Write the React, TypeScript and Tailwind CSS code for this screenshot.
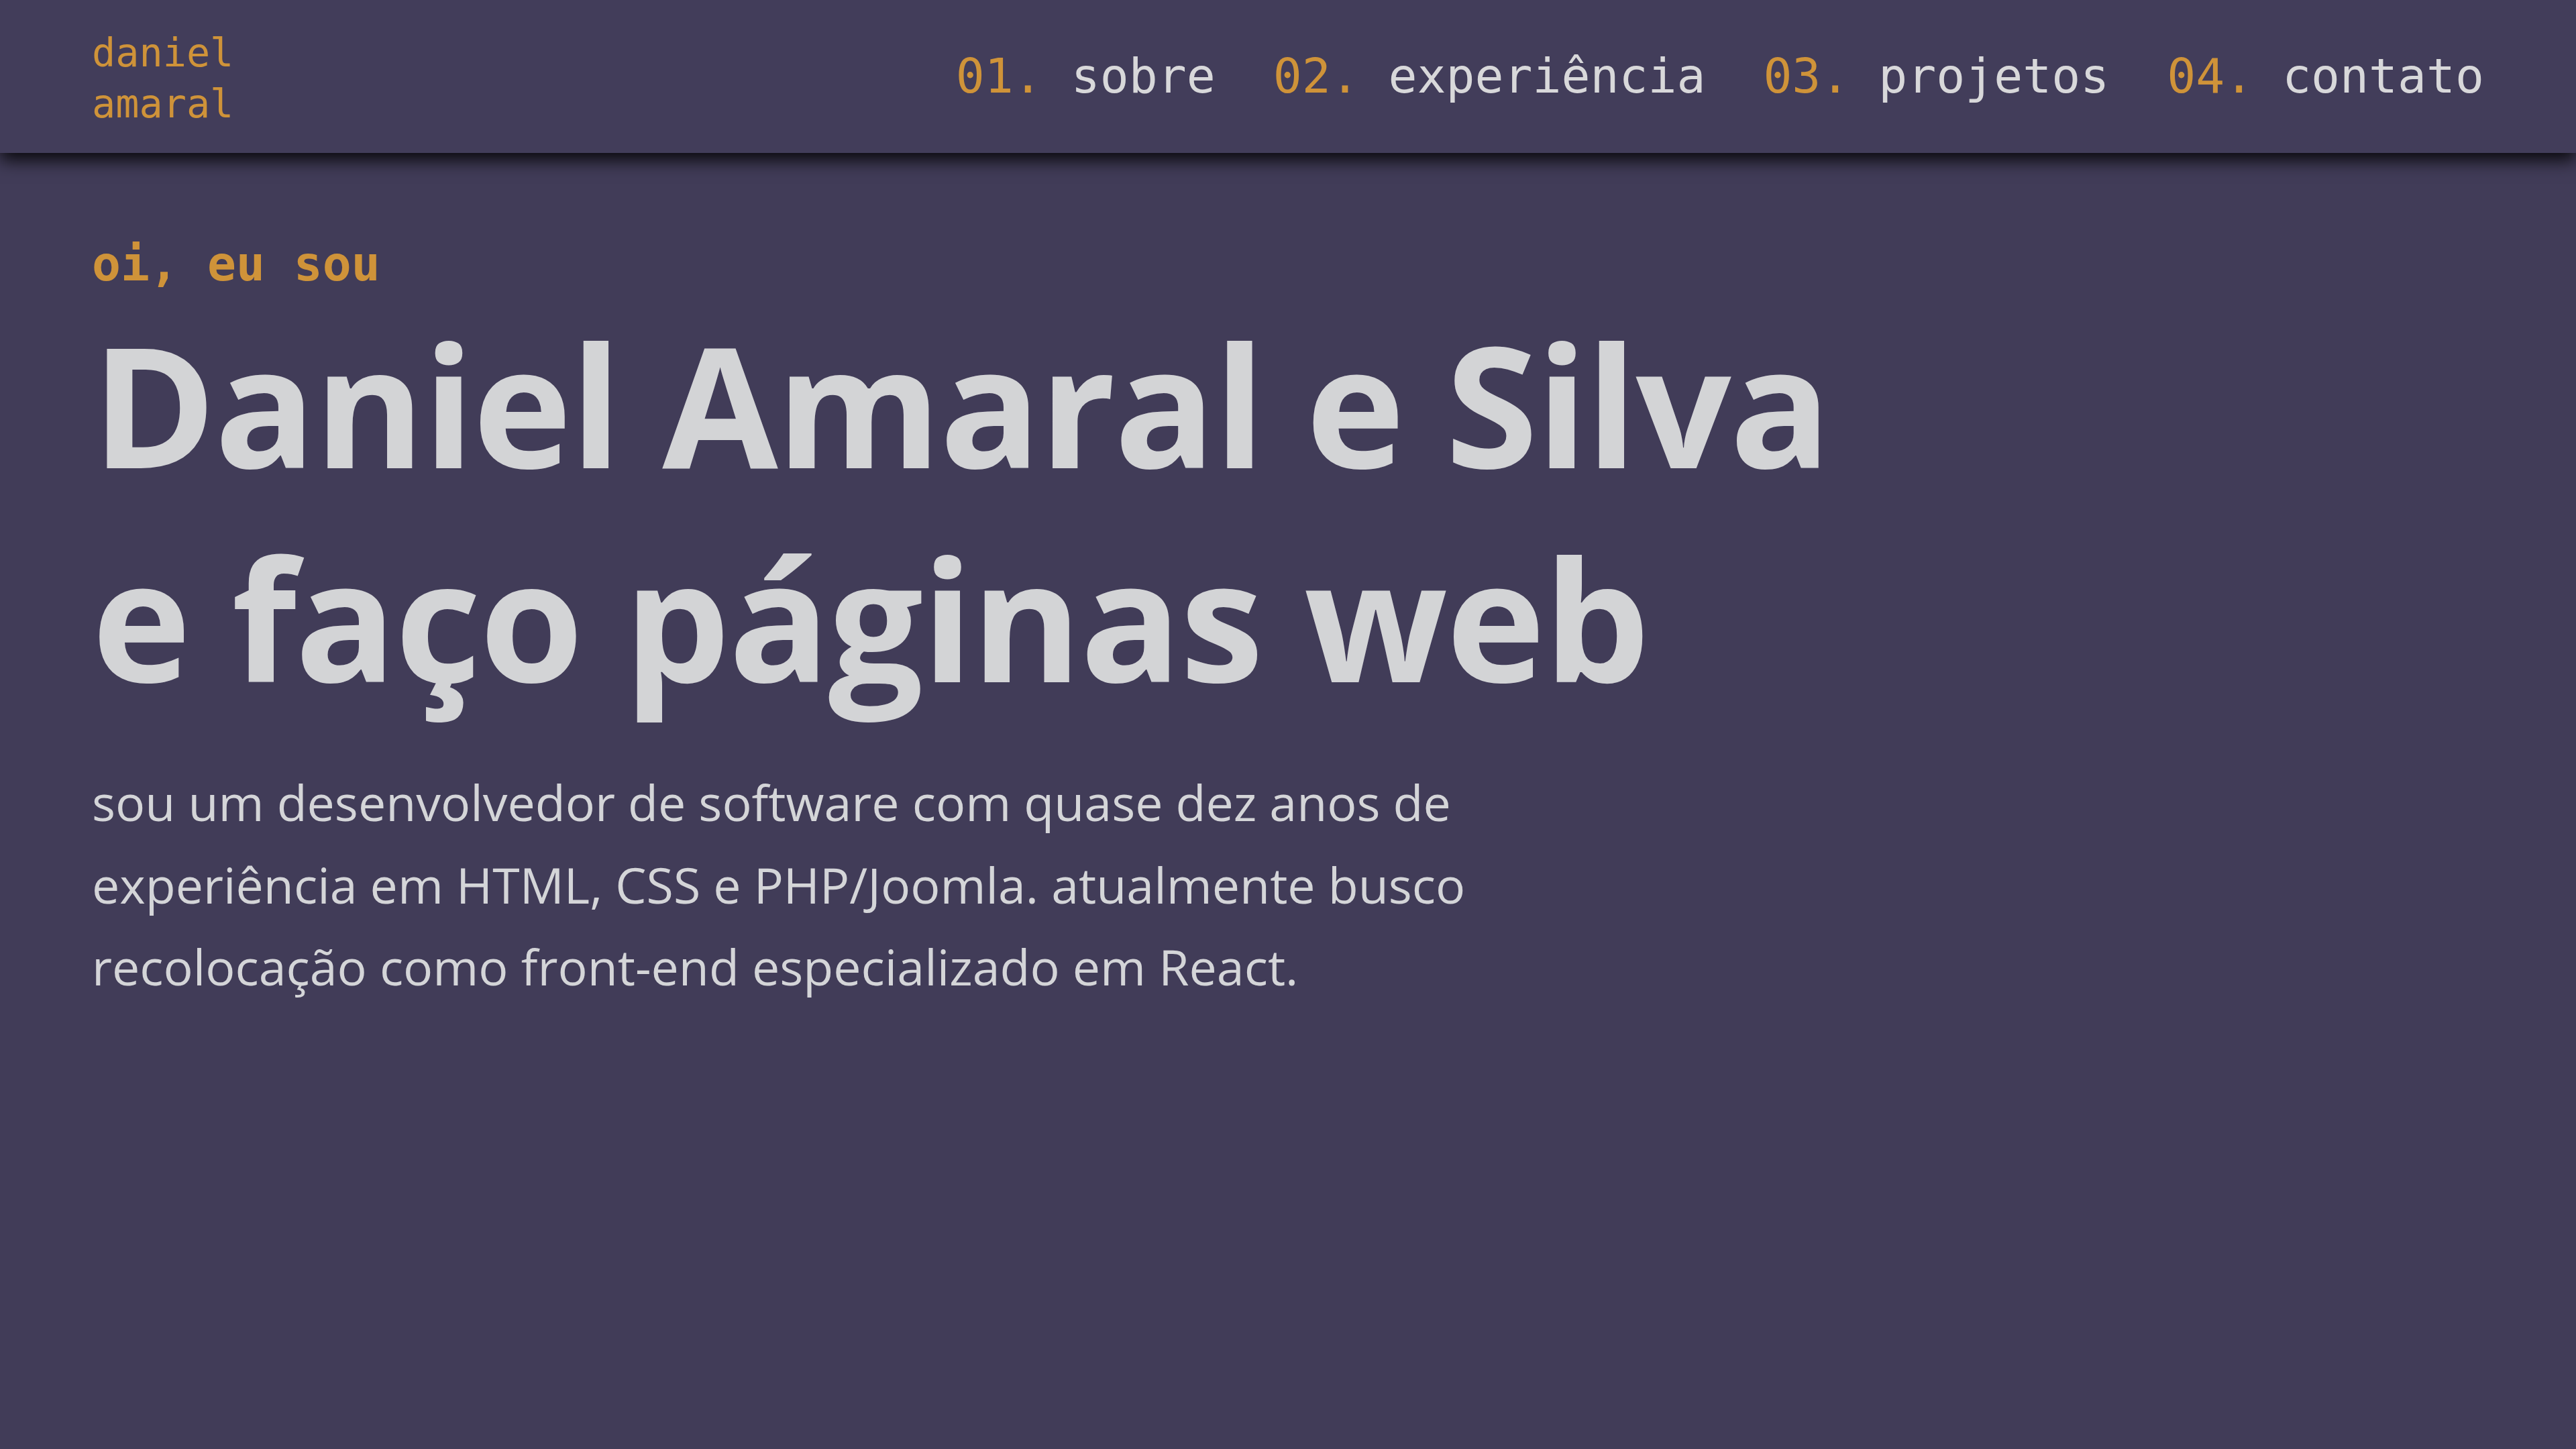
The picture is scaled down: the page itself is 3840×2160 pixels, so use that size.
import React from "react";

const mono = "font-['DejaVu_Sans_Mono','Liberation_Mono',monospace]";
const sans = "font-['Open_Sans','Noto_Sans',sans-serif]";

const navItems = [
  { n: "01.", label: "sobre" },
  { n: "02.", label: "experiência" },
  { n: "03.", label: "projetos" },
  { n: "04.", label: "contato" },
];

export default function App() {
  return (
    <div className="min-h-screen bg-[#413c58] text-[#d4d5d8]">
      <header className="relative z-10 flex h-[228px] items-center justify-between bg-[#423d5a] px-[137px] shadow-[0_10px_25px_rgba(0,0,0,0.9)]">
        <a className={`${mono} block pt-[6px] text-[58.5px] leading-[76px] text-[#cf9339]`}>
          daniel
          <br />
          amaral
        </a>
        <nav className="flex items-center gap-[86px]">
          {navItems.map((it) => (
            <a key={it.n} className={`${mono} whitespace-pre text-[71.4px] leading-[86px] text-[#d8d8da]`}>
              <span className="text-[#cf9339]">{it.n}</span> {it.label}
            </a>
          ))}
        </nav>
      </header>
      <main className="px-[137px] pt-[123px]">
        <p className={`${mono} text-[71.4px] font-bold leading-[85px] text-[#cf9339]`}>oi, eu sou</p>
        <h1 className={`${sans} mt-[6px] text-[250px] font-bold leading-[319px] tracking-[-2.2px] text-[#d3d4d6]`}>
          Daniel Amaral e Silva
          <br />
          e faço páginas web
        </h1>
        <p className={`${sans} mt-[55px] text-[73.5px] leading-[122.5px] text-[#d4d5d8]`}>
          sou um desenvolvedor de software com quase dez anos de
          <br />
          experiência em HTML, CSS e PHP/Joomla. atualmente busco
          <br />
          recolocação como front-end especializado em React.
        </p>
      </main>
    </div>
  );
}
